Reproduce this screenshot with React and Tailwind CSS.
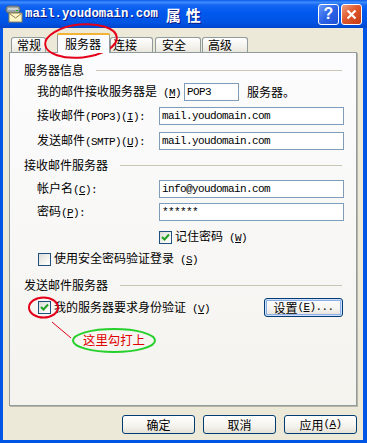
import React from "react";

const M = ({ children }) => (
  <span className="font-['Liberation_Mono',monospace] text-[11px] tracking-[-0.6px]">{children}</span>
);

function Check({ checked }) {
  return (
    <div className="w-[13px] h-[13px] border border-[#1C5180] bg-[linear-gradient(135deg,#DCDCD7,#F8F8F4_70%,#FFFFFF)] flex items-center justify-center shrink-0">
      {checked && (
        <svg width="9" height="9" viewBox="0 0 9 9">
          <path d="M1 4 L3.5 6.5 L8 1.5" stroke="#21A121" strokeWidth="2" fill="none" />
        </svg>
      )}
    </div>
  );
}

function Group({ title }) {
  return (
    <div className="flex items-center h-[16px] pl-[14px] pr-[14px]">
      <span className="leading-none">{title}</span>
      <div className="flex-1 h-px bg-[#C9C6B6] ml-[12px]" />
    </div>
  );
}

function Input({ value, w = "w-[185px]" }) {
  return (
    <div className={`${w} h-[18px] border border-[#7F9DB9] bg-white flex items-center pl-[2px]`}>
      <span className="font-['Liberation_Mono',monospace] text-[11px] tracking-[-0.6px] leading-none text-black">{value}</span>
    </div>
  );
}

function Btn({ children }) {
  return (
    <div className="w-[73px] h-[19px] rounded-[3px] border border-[#003C74] bg-[linear-gradient(to_bottom,#FFFFFF,#F4F3EE_60%,#E3E0D6)] flex items-center justify-center text-[12px] leading-none">
      {children}
    </div>
  );
}

function Tab({ children, w, pl, ml }) {
  return (
    <div
      className={`${w} ${pl} ${ml} h-[15px] rounded-t-[3px] border border-b-0 border-[#919B9C] bg-[linear-gradient(to_bottom,#FFFFFF,#F3F2EC_60%,#E9E7DE)] flex items-center text-[12px] leading-none`}
    >
      {children}
    </div>
  );
}

export default function App() {
  return (
    <div className="relative w-[367px] h-[443px] flex flex-col font-['Noto_Sans_CJK_SC',sans-serif] text-[12px] text-black select-none">
      {/* Title bar */}
      <div className="h-[28px] flex items-center bg-[linear-gradient(to_bottom,#0A5AE8_0%,#3D8DFF_8%,#1566F2_18%,#0058EE_45%,#0054E3_80%,#0046CE_100%)] pl-[5px] pr-[5px]">
        <svg width="18" height="18" viewBox="0 0 18 18" className="shrink-0">
          <rect x="1" y="1" width="14" height="7" rx="3" fill="#9AA4A8" stroke="#5D676B" strokeWidth="1" />
          <rect x="3" y="3" width="10" height="2" fill="#C9D0D2" />
          <rect x="11" y="5" width="2" height="1" fill="#22C022" />
          <rect x="4" y="8" width="13" height="9" fill="#FFF6C8" stroke="#8C8150" strokeWidth="1" />
          <path d="M4.5 8.5 L10.5 13 L16.5 8.5" stroke="#8C8150" strokeWidth="1" fill="none" />
        </svg>
        <div className="ml-[2px] flex items-center text-white font-bold [text-shadow:1px_1px_#0A1883] whitespace-nowrap">
          <span className="font-['Liberation_Mono',monospace] text-[12.3px]">mail.youdomain.com</span>
          <span className="ml-[8px] text-[15px] tracking-[5px] leading-none">属性</span>
        </div>
        <div className="flex-1" />
        <div className="w-[21px] h-[21px] rounded-[3px] border border-white bg-[linear-gradient(135deg,#6A9AF8,#2B63E6_50%,#1E4FD6)] flex items-center justify-center text-white font-bold text-[16px] leading-none font-['Liberation_Sans',sans-serif]">
          ?
        </div>
        <div className="ml-[2px] w-[21px] h-[21px] rounded-[3px] border border-white bg-[linear-gradient(135deg,#F0A080,#E0582E_45%,#C53C14)] flex items-center justify-center">
          <svg width="11" height="11" viewBox="0 0 11 11">
            <path d="M1.5 1.5 L9.5 9.5 M9.5 1.5 L1.5 9.5" stroke="white" strokeWidth="2.2" />
          </svg>
        </div>
      </div>

      {/* Body */}
      <div className="flex-1 flex flex-col bg-[#ECE9D8] border-l-[3px] border-r-[4px] border-b-[3px] border-[#0055E5]">
        {/* Tabs */}
        <div className="mt-[4px] ml-[8px] h-[20px] flex items-end">
          <Tab w="w-[35px]" pl="pl-[5px]" ml="">常规</Tab>
          <div className="ml-[11px] w-[53px] h-[20px] relative z-10 mb-[-1px] rounded-t-[3px] border border-b-0 border-[#919B9C] bg-[#FCFCFE] flex flex-col">
            <div className="h-[2px] bg-[#F5B335] rounded-t-[2px] mx-[-1px] mt-[-1px]" />
            <div className="flex-1 flex items-center pl-[7px] leading-none">服务器</div>
          </div>
          <Tab w="w-[43px]" pl="pl-[2px]" ml="">连接</Tab>
          <Tab w="w-[46px]" pl="pl-[6px]" ml="ml-[2px]">安全</Tab>
          <Tab w="w-[46px]" pl="pl-[5px]" ml="ml-[1px]">高级</Tab>
        </div>

        {/* Panel */}
        <div className="ml-[6px] w-[348px] h-[354px] border border-[#919B9C] bg-[linear-gradient(to_bottom,#FCFCFE,#F4F3EE)] shadow-[1px_1px_0_#B8B6A8] flex flex-col">
          <div className="mt-[9px]">
            <Group title="服务器信息" />
          </div>
          <div className="mt-[5px] h-[18px] flex items-center pl-[27px]">
            <span className="w-[147px] leading-none">
              我的邮件接收服务器是<M> (<u>M</u>)</M>
            </span>
            <Input value="POP3" w="w-[55px]" />
            <span className="ml-[8px] leading-none">服务器。</span>
          </div>
          <div className="mt-[6px] h-[18px] flex items-center pl-[27px]">
            <span className="w-[122px] leading-none">
              接收邮件<M>(POP3)(<u>I</u>):</M>
            </span>
            <Input value="mail.youdomain.com" />
          </div>
          <div className="mt-[7px] h-[18px] flex items-center pl-[27px]">
            <span className="w-[122px] leading-none">
              发送邮件<M>(SMTP)(<u>U</u>):</M>
            </span>
            <Input value="mail.youdomain.com" />
          </div>
          <div className="mt-[7px]">
            <Group title="接收邮件服务器" />
          </div>
          <div className="mt-[7px] h-[18px] flex items-center pl-[27px]">
            <span className="w-[122px] leading-none">
              帐户名<M>(<u>C</u>):</M>
            </span>
            <Input value="info@youdomain.com" />
          </div>
          <div className="mt-[5px] h-[18px] flex items-center pl-[27px]">
            <span className="w-[122px] leading-none">
              密码<M>(<u>P</u>):</M>
            </span>
            <Input value="******" />
          </div>
          <div className="mt-[7px] h-[18px] flex items-center pl-[149px]">
            <Check checked />
            <span className="ml-[3px] leading-none">
              记住密码<M> (<u>W</u>)</M>
            </span>
          </div>
          <div className="mt-[4px] h-[18px] flex items-center pl-[28px]">
            <Check />
            <span className="ml-[3px] leading-none">
              使用安全密码验证登录<M> (<u>S</u>)</M>
            </span>
          </div>
          <div className="mt-[9px]">
            <Group title="发送邮件服务器" />
          </div>
          <div className="mt-[5px] h-[19px] flex items-center pl-[28px]">
            <Check checked />
            <span className="ml-[3px] w-[210px] leading-none">
              我的服务器要求身份验证<M> (<u>V</u>)</M>
            </span>
            <div className="w-[79px] h-[19px] rounded-[3px] border border-[#003C74] bg-[linear-gradient(to_bottom,#FFFFFF,#F4F3EE_60%,#E3E0D6)] shadow-[inset_0_0_0_1px_#CFE0FC,inset_0_0_0_2px_#8CAFEA] flex items-center justify-center leading-none">
              设置<M>(<u>E</u>)...</M>
            </div>
          </div>
        </div>

        {/* Bottom buttons */}
        <div className="mt-[9px] flex justify-end gap-[8px] pr-[6px]">
          <Btn>确定</Btn>
          <Btn>取消</Btn>
          <Btn>
            应用<M>(<u>A</u>)</M>
          </Btn>
        </div>
      </div>

      {/* Annotations overlay */}
      <svg className="absolute left-0 top-0 pointer-events-none" width="367" height="443" viewBox="0 0 367 443">
        <ellipse cx="81" cy="41" rx="36" ry="16.5" transform="rotate(-6 81 41)" fill="none" stroke="#E5001A" strokeWidth="2" />
        <ellipse cx="43.5" cy="307.5" rx="14.5" ry="10" fill="none" stroke="#E5001A" strokeWidth="2" />
        <line x1="52" y1="322" x2="71" y2="338" stroke="#E5001A" strokeWidth="1" />
        <ellipse cx="114" cy="340.5" rx="41" ry="11.5" fill="none" stroke="#25D02A" strokeWidth="2" />
      </svg>
      <div className="absolute left-[83px] top-[333px] text-[12.4px] leading-[14px] text-[#E00000] pointer-events-none">
        这里勾打上
      </div>
    </div>
  );
}
